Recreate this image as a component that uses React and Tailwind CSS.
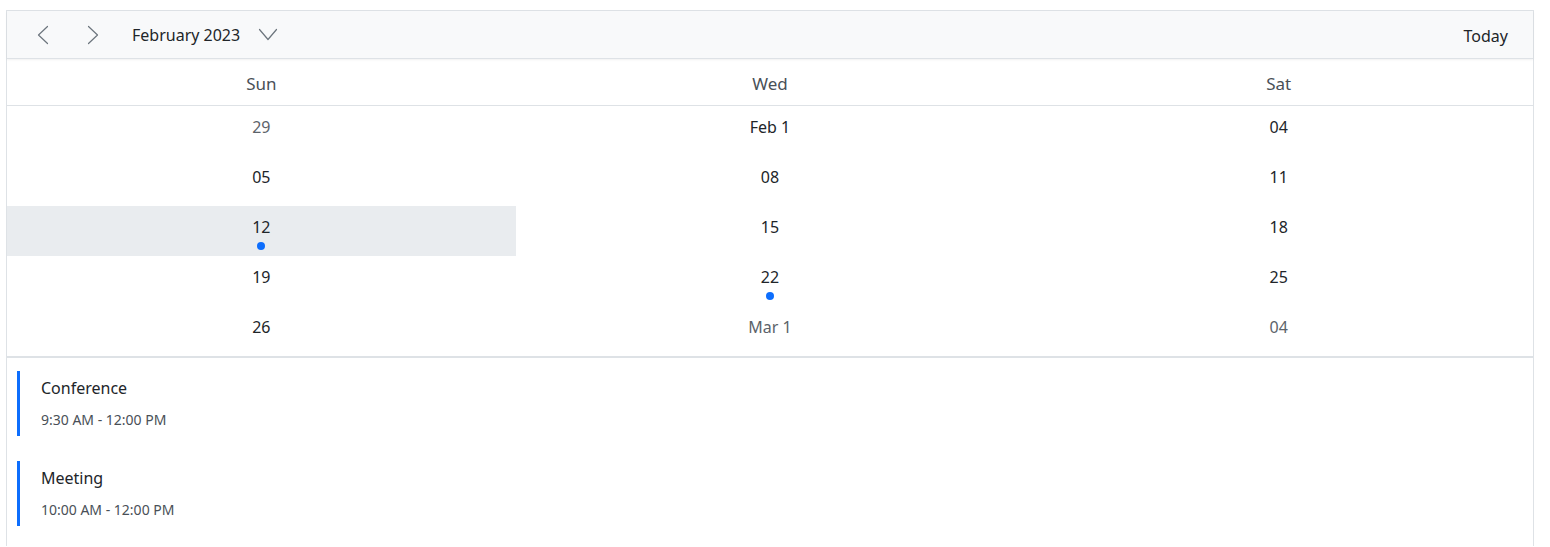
import React from "react";

const rows = [
  [
    { t: "29", dim: true },
    { t: "Feb 1" },
    { t: "04" },
  ],
  [{ t: "05" }, { t: "08" }, { t: "11" }],
  [{ t: "12", sel: true, dot: true }, { t: "15" }, { t: "18" }],
  [{ t: "19" }, { t: "22", dot: true }, { t: "25" }],
  [{ t: "26" }, { t: "Mar 1", dim: true }, { t: "04", dim: true }],
];

const events = [
  { title: "Conference", time: "9:30 AM - 12:00 PM" },
  { title: "Meeting", time: "10:00 AM - 12:00 PM" },
];

function Chevron({ dir }) {
  const d =
    dir === "left"
      ? "M14.5 1.5 L5.5 10 L14.5 18.5"
      : dir === "right"
      ? "M5.5 1.5 L14.5 10 L5.5 18.5"
      : "M1.5 4.5 L10 14.5 L18.5 4.5";
  return (
    <svg width="20" height="20" viewBox="0 0 20 20" fill="none">
      <path d={d} stroke="#6c757d" strokeWidth="1.2" strokeLinecap="round" strokeLinejoin="round" />
    </svg>
  );
}

export default function App() {
  return (
    <div
      className="bg-white min-h-[547px] pt-[10px] pl-[6px]"
      style={{ fontFamily: '"Segoe UI", "Noto Sans", sans-serif' }}
    >
      <div className="w-[1528px] border border-[#dee2e6] border-b-0">
        <div className="h-[48px] bg-[#f8f9fa] border-b border-[#dee2e6] shadow-[0_1px_2px_rgba(0,0,0,0.06)] flex items-center pl-[26px] pr-[25px]">
          <button className="w-[20px] flex justify-center">
            <Chevron dir="left" />
          </button>
          <button className="ml-[30px] w-[20px] flex justify-center">
            <Chevron dir="right" />
          </button>
          <span className="ml-[29px] text-[16px] text-[#212529]">February 2023</span>
          <span className="ml-[18px] flex items-center">
            <Chevron dir="down" />
          </span>
          <span className="ml-auto pt-[2px] text-[16px] text-[#212529]">Today</span>
        </div>
        <div className="grid grid-cols-3 h-[47px] items-center pt-[4px] border-b border-[#dee2e6]">
          {["Sun", "Wed", "Sat"].map((d) => (
            <div key={d} className="text-center text-[17px] text-[#495057]">
              {d}
            </div>
          ))}
        </div>
        <div className="border-b-2 border-[#dee2e6]">
          {rows.map((r, i) => (
            <div key={i} className="grid grid-cols-3 h-[50px]">
              {r.map((c, j) => (
                <div
                  key={j}
                  className={`flex flex-col items-center pt-[9px] ${c.sel ? "bg-[#e9ecef]" : ""}`}
                >
                  <span
                    className={`text-[16px] leading-[24px] ${c.dim ? "text-[#5c636a]" : "text-[#212529]"}`}
                  >
                    {c.t}
                  </span>
                  {c.dot && <span className="mt-[3px] w-[8px] h-[8px] rounded-full bg-[#0d6efd]" />}
                </div>
              ))}
            </div>
          ))}
        </div>
        <div className="pt-[13px] pl-[10px] flex flex-col gap-[25px] pb-[20px]">
          {events.map((e) => (
            <div key={e.title} className="h-[65px] border-l-[3px] border-[#0d6efd] pl-[21px] pt-[5px]">
              <div className="text-[16px] leading-[24px] text-[#212529]">{e.title}</div>
              <div className="mt-[10px] text-[14px] leading-[20px] text-[#495057]">{e.time}</div>
            </div>
          ))}
        </div>
      </div>
    </div>
  );
}
